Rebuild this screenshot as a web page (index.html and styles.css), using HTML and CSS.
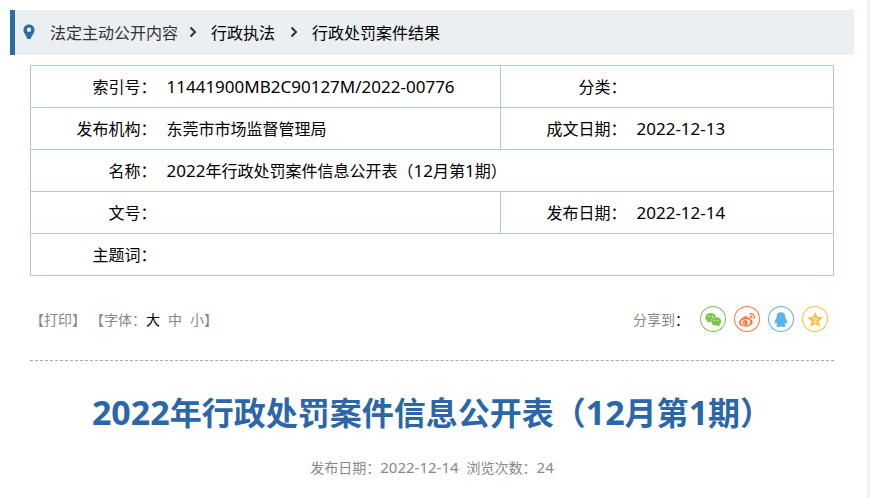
FILE: index.html
```html
<!DOCTYPE html>
<html lang="zh-CN">
<head>
  <meta charset="UTF-8">
  <meta name="viewport" content="width=device-width, initial-scale=1">
  <title>2022年行政处罚案件信息公开表（12月第1期）</title>
  <link rel="stylesheet" href="styles.css">
</head>
<body>
  <div class="page">
    <!-- 当前位置 -->
    <nav class="crumbs">
      <svg class="crumbs__pin" viewBox="0 0 12 16">
        <path fill-rule="evenodd" d="M6 .5C2.8.5.5 2.9.5 5.900c0 3.200 2.700 5.300 3.900 9.100h3.200c1.200-3.800 3.900-5.900 3.900-9.100C11.500 2.900 9.200.5 6 .5zM6 3.500a2.200 2.200 0 1 1 0 4.400a2.200 2.200 0 0 1 0-4.400z"/>
      </svg>
      <a class="crumbs__link crumbs__link--root" href="#">法定主动公开内容</a>
      <svg class="crumbs__arrow" viewBox="0 0 8 12"><path d="M1.500 1.500L6 6L1.500 10.500"/></svg>
      <a class="crumbs__link" href="#">行政执法</a>
      <svg class="crumbs__arrow" viewBox="0 0 8 12"><path d="M1.500 1.500L6 6L1.500 10.500"/></svg>
      <a class="crumbs__link" href="#">行政处罚案件结果</a>
    </nav>

    <main class="article">
      <!-- 公开信息 -->
      <table class="info">
        <colgroup>
          <col class="info__label">
          <col class="info__wide">
          <col class="info__label">
          <col>
        </colgroup>
        <tr>
          <th scope="row">索引号：</th>
          <td><span class="num">11441900MB2C90127M/2022-00776</span></td>
          <th scope="row" class="line">分类：</th>
          <td></td>
        </tr>
        <tr>
          <th scope="row">发布机构：</th>
          <td>东莞市市场监督管理局</td>
          <th scope="row" class="line">成文日期：</th>
          <td><span class="num">2022-12-13</span></td>
        </tr>
        <tr>
          <th scope="row">名称：</th>
          <td colspan="3"><span class="num">2022</span>年行政处罚案件信息公开表（<span class="num">12</span>月第<span class="num">1</span>期）</td>
        </tr>
        <tr>
          <th scope="row">文号：</th>
          <td></td>
          <th scope="row" class="line">发布日期：</th>
          <td><span class="num">2022-12-14</span></td>
        </tr>
        <tr>
          <th scope="row">主题词：</th>
          <td colspan="3"></td>
        </tr>
      </table>

      <!-- 打印、字体、分享 -->
      <div class="tools">
        <div class="tools__left">
          <span>【<button type="button">打印</button>】</span>
          <span class="sizes">【字体：<button type="button" class="active">大</button><button type="button">中</button><button type="button">小</button>】</span>
        </div>
        <div class="share">
          <span class="share__text">分享到<b>：</b></span>
          <a class="share__icon share__icon--wechat" href="#" aria-label="微信">
            <svg viewBox="0 0 26 26">
              <path d="M10.700 7C7.700 7 5.400 9 5.400 11.500c0 1.400.7 2.600 1.900 3.400l-.5 1.800l2.100-1c.9.3 1.700.4 2.500.3c-.6-3 2-5.200 4.700-5.200C15.600 8.500 13.400 7 10.700 7z"/>
              <path d="M16.200 11.300c-2.800 0-4.900 1.900-4.900 4.200s2 4.200 4.900 4.200c.6 0 1.200-.1 1.700-.3l1.900 1l-.4-1.600c1.100-.8 1.800-2 1.800-3.300c0-2.300-2.200-4.200-5-4.200z"/>
              <g class="hole">
                <circle cx="8.900" cy="10.200" r=".7"/><circle cx="12.500" cy="10.200" r=".7"/>
                <circle cx="14.700" cy="14.300" r=".6"/><circle cx="17.700" cy="14.300" r=".6"/>
              </g>
            </svg>
          </a>
          <a class="share__icon share__icon--weibo" href="#" aria-label="微博">
            <svg viewBox="0 0 26 26">
              <path d="M11.300 10.200c1.500-.7 2.400 0 1.900 1.700c1.900-.8 3.600-.5 3.100 1.400c1.900.5 2.700 1.600 2.400 2.900c-.5 2.700-3.800 4.600-7.400 4.600c-3.500 0-6.300-1.800-6.300-4.200c0-2.200 3.300-5.300 6.300-6.400z"/>
              <ellipse class="hole" cx="11.500" cy="16.300" rx="4.700" ry="3" transform="rotate(-8 11.500 16.300)"/>
              <circle cx="11.100" cy="16.500" r="2.600"/>
              <circle class="hole" cx="10.300" cy="17" r=".8"/>
              <path class="wave" d="M15.500 7.900c3.200-.8 5.500 1.700 4.600 4.800M15.700 10.300c1.500-.3 2.500.8 2 2.100"/>
            </svg>
          </a>
          <a class="share__icon share__icon--qq" href="#" aria-label="QQ">
            <svg viewBox="0 0 26 26">
              <path d="M13 6.300c-2.800 0-4.500 2-4.400 4.700c0 .5 0 .8-.3 1.200c-1.200 1.900-1.800 3.700-1.500 5.100c.3.700 1 .1 1.500-.8c.2.900.6 1.500 1.200 2.100c-1.700.8-1.500 2.300.4 2.400c1.300.1 2.300-.2 3.100-.8c.8.600 1.800.9 3.100.8c1.900-.1 2.100-1.600.4-2.400c.6-.6 1-1.200 1.200-2.100c.5.900 1.200 1.500 1.500.8c.3-1.400-.3-3.200-1.500-5.100c-.3-.4-.3-.7-.3-1.200c.1-2.700-1.600-4.700-4.400-4.700z"/>
            </svg>
          </a>
          <a class="share__icon share__icon--qzone" href="#" aria-label="QQ空间">
            <svg viewBox="0 0 26 26">
              <path d="M13.200 5.900l2.300 4.900l5.500.6l-4.100 3.900l1.200 5.500l-4.900-2.700l-4.900 2.700l1.200-5.500l-4.100-3.900l5.500-.6z"/>
              <path class="mark" d="M10.700 12.700h4.700l-3.900 3.300h4.500"/>
            </svg>
          </a>
        </div>
      </div>

      <h1 class="title"><span class="num">2022</span>年行政处罚案件信息公开表（<span class="num">12</span>月第<span class="num">1</span>期）</h1>
      <p class="meta">
        <span>发布日期：<span class="num">2022-12-14</span></span>
        <span>浏览次数：<span class="num">24</span></span>
      </p>
    </main>
  </div>
</body>
</html>
```

FILE: styles.css
```css
* {
  box-sizing: border-box;
}

body {
  margin: 0;
  min-height: 100vh;
  border-right: 3px solid #f1f1f1;
  background: #fff;
  color: #000;
  font-family: "Noto Sans CJK SC", sans-serif;
  font-size: 16px;
  line-height: 24px;
}

a {
  color: inherit;
  text-decoration: none;
}

button {
  padding: 0;
  border: 0;
  background: none;
  color: inherit;
  font: inherit;
  cursor: pointer;
}

/* 数字和字母 */
.num {
  font-family: "Noto Sans", sans-serif;
  font-size: 17px;
  line-height: 1;
}

.page {
  padding: 10px 13px 0 10px;
}

/* 当前位置 */
.crumbs {
  display: flex;
  align-items: center;
  height: 45px;
  padding: 0 0 2px 8px;
  border-left: 5px solid #2e6da4;
  background: #ebeff2;
}

.crumbs__pin {
  width: 12px;
  height: 16px;
  margin-right: 15px;
  fill: #2e6da4;
}

.crumbs__arrow {
  width: 8px;
  height: 12px;
  margin: 0 14px 0 15px;
  fill: none;
  stroke: #333;
  stroke-width: 2;
}

.crumbs__link--root {
  margin-right: -4px;
  color: #333;
}

/* 公开信息 */
.article {
  padding: 10px 20px 0;
}

.info {
  width: 100%;
  border-collapse: collapse;
  table-layout: fixed;
}

.info__label {
  width: 126px;
}

.info__wide {
  width: 344px;
}

.info tr {
  height: 42px;
  border: 1px solid #b0c8df;
}

.info th,
.info td {
  padding: 0 0 2px;
  text-align: left;
}

.info th {
  font-weight: normal;
  text-align: right;
}

.info td {
  padding-left: 10px;
}

.info .line {
  border-left: 1px solid #b0c8df;
}

/* 打印、字体、分享 */
.tools {
  display: flex;
  align-items: center;
  justify-content: space-between;
  margin-top: 30px;
  padding: 0 6px 28px 0;
  border-bottom: 1px dashed #aaa;
  color: #888;
  font-size: 14px;
}

.tools__left {
  display: flex;
  gap: 4px;
}

.sizes button + button {
  margin-left: 8px;
}

.sizes .active {
  color: #000;
}

.share {
  display: flex;
  align-items: center;
  gap: 8px;
}

.share__text {
  margin-right: 3px;
}

.share__text b {
  color: #000;
  font-weight: normal;
}

.share__icon {
  width: 26px;
  height: 26px;
  border-radius: 50%;
  box-shadow: inset 0 0 0 1px;
}

.share__icon svg {
  display: block;
  fill: currentColor;
}

.share__icon .hole {
  fill: #fff;
}

.share__icon .wave {
  fill: none;
  stroke: currentColor;
  stroke-width: 1.3;
}

.share__icon .mark {
  fill: none;
  stroke: #fff;
  stroke-width: 0.9;
}

.share__icon--wechat { color: #7bc549; }
.share__icon--weibo  { color: #ff763b; }
.share__icon--qq     { color: #56b6e7; }
.share__icon--qzone  { color: #fdbe3d; }

/* 标题 */
.title {
  margin: 26px 0 0;
  color: #2b67a8;
  font-size: 32px;
  line-height: 48px;
  text-align: center;
}

.title .num {
  font-size: 34px;
}

.meta {
  display: flex;
  justify-content: center;
  gap: 8px;
  margin: 20px 0 0;
  color: #888;
  font-size: 14px;
}

.meta .num {
  font-size: 15px;
}
```
